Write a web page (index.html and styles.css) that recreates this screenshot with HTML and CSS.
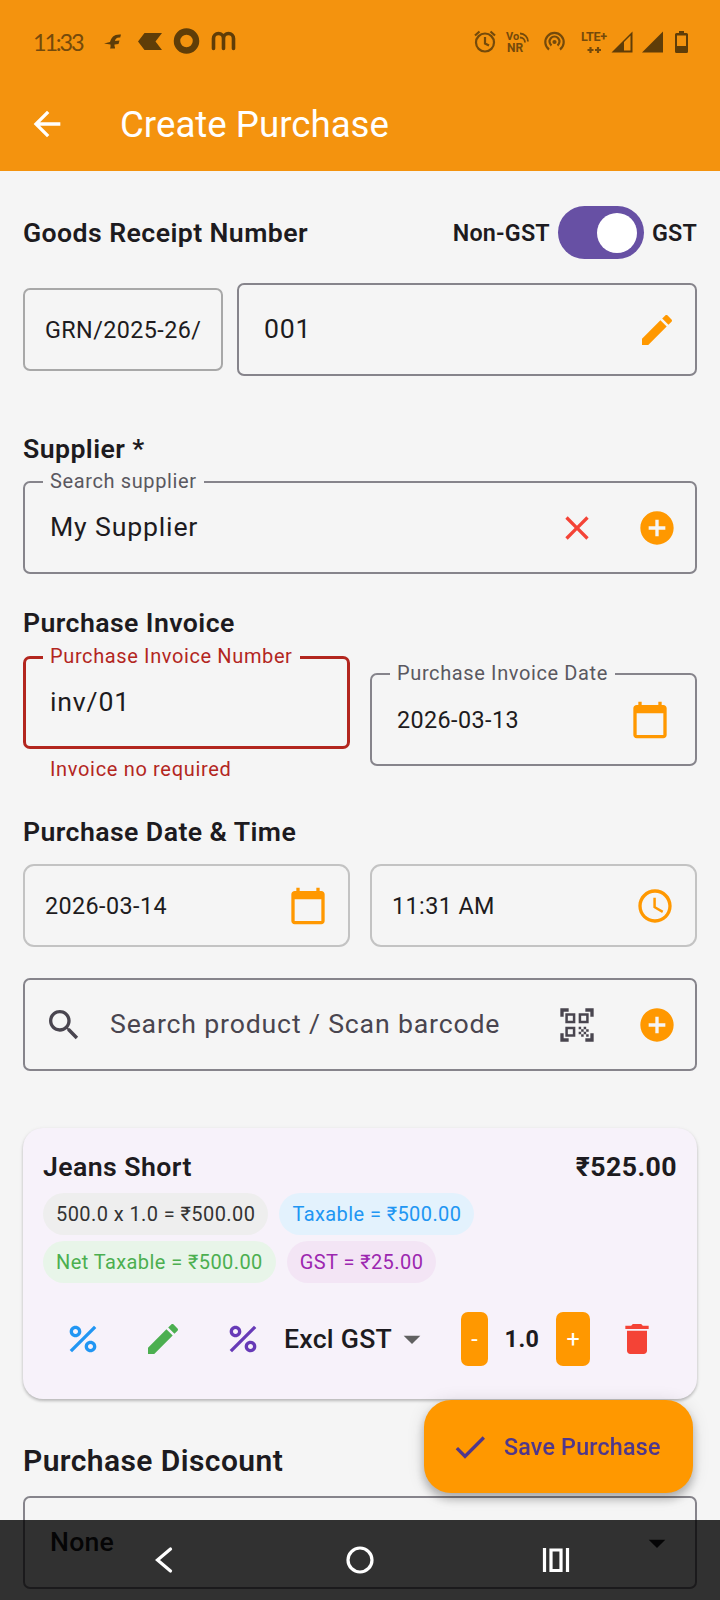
FILE: index.html
```html
<!DOCTYPE html>
<html lang="en">
<head>
  <meta charset="UTF-8">
  <meta name="viewport" content="width=device-width, initial-scale=1.0">
  <title>Create Purchase</title>
  <link rel="stylesheet" href="styles.css">
</head>
<body>
  <!-- Shared icons -->
  <svg class="sprite" aria-hidden="true">
    <symbol id="i-edit" viewBox="0 0 24 24"><path d="M3 17.25V21h3.75L17.81 9.94l-3.75-3.75L3 17.25zM20.71 7.04c.39-.39.39-1.02 0-1.41l-2.34-2.34c-.39-.39-1.02-.39-1.41 0l-1.83 1.83 3.75 3.75 1.83-1.83z"/></symbol>
    <symbol id="i-add" viewBox="0 0 24 24"><path d="M12 2C6.48 2 2 6.48 2 12s4.48 10 10 10 10-4.48 10-10S17.52 2 12 2zm5 11h-4v4h-2v-4H7v-2h4V7h2v4h4v2z"/></symbol>
    <symbol id="i-calendar" viewBox="0 0 24 24"><path d="M20 3h-1V1h-2v2H7V1H5v2H4c-1.1 0-2 .9-2 2v16c0 1.1.9 2 2 2h16c1.1 0 2-.9 2-2V5c0-1.1-.9-2-2-2zm0 18H4V8h16v13z"/></symbol>
    <symbol id="i-percent" viewBox="0 0 24 24"><path d="M7.5 11C9.43 11 11 9.43 11 7.5S9.43 4 7.5 4 4 5.57 4 7.5 5.57 11 7.5 11zm0-5C8.33 6 9 6.67 9 7.5S8.33 9 7.5 9 6 8.33 6 7.5 6.67 6 7.5 6zM4 18.58 18.59 4 20 5.41 5.42 20zM16.5 13c-1.93 0-3.5 1.57-3.5 3.5s1.57 3.5 3.5 3.5 3.5-1.57 3.5-3.5-1.57-3.5-3.5-3.5zm0 5c-.83 0-1.5-.67-1.5-1.5s.67-1.5 1.5-1.5 1.5.67 1.5 1.5-.67 1.5-1.5 1.5z"/></symbol>
    <symbol id="i-drop" viewBox="0 0 24 24"><path d="M7 10l5 5 5-5z"/></symbol>
  </svg>

  <header class="topbar">
    <div class="status">
      <span class="clock">11:33</span>
      <svg class="status-left" width="132" height="30" viewBox="0 0 132 30">
        <path d="M-1 16.500 5 15c1.500-5 4-8 11-7.500l-.8 3c-3.500-.3-4.700 1-5.200 3.500l4.500-.5-1 3.500-4 .5c-.3 2 .8 2.500.5 4H5c.8-1.500.5-2.500.5-4z"/>
        <path d="M33 14.500l6.500-8.500H57L50.500 14.500 57 23H39.500z"/>
        <circle cx="81.500" cy="14" r="9.500" fill="none" stroke="#5f3d08" stroke-width="6.500"/>
        <path d="M108.500 21.500V11.500a4.800 4.800 0 0 1 10 0v10M118.500 11.500a4.800 4.800 0 0 1 10 0v10" fill="none" stroke="#5f3d08" stroke-width="3.600" stroke-linecap="round"/>
      </svg>
      <svg class="status-right" width="216" height="30" viewBox="0 0 216 30">
        <g fill="none" stroke="#744a0b" stroke-width="2.200">
          <circle cx="13" cy="15.500" r="9"/>
          <path d="M13 10v6.500l4 2M3 8.500l4.500-4M23 8.500l-4.500-4"/>
          <path d="M48 10.500a5 5 0 0 1 5 5M48 6.500a8 8 0 0 1 8 8" stroke-width="1.800"/>
          <path d="M77 22.500a9.200 9.200 0 1 1 11 0M79.500 18.500a5 5 0 1 1 6 0"/>
          <circle cx="82.500" cy="15" r="1" />
          <path d="M118.500 20v6M115.500 23h6M126 20v6M123 23h6"/>
        </g>
        <text x="34" y="13" class="tiny">Vo</text>
        <text x="35" y="25" class="tiny tiny-nr">NR</text>
        <text x="109" y="13.500" class="tiny tiny-lte">LTE+</text>
        <path fill-rule="evenodd" d="M139.500 25.500 160.500 4.500v21zM152 15v8.500h6.500v-15z"/>
        <path d="M170 25.500 191 4.500v21z"/>
        <path fill-rule="evenodd" d="M207 4h5v2h2.500q1.500 0 1.500 1.500v17q0 1.500-1.500 1.500h-10q-1.500 0-1.500-1.500v-17q0-1.500 1.500-1.500h2.500zM205 8.500V19h9V8.500z"/>
      </svg>
    </div>
    <div class="appbar">
      <svg class="icon" viewBox="0 0 24 24"><path d="M20 11H7.830l5.590-5.590L12 4l-8 8 8 8 1.410-1.410L7.830 13H20v-2z"/></svg>
      <h1>Create Purchase</h1>
    </div>
  </header>

  <main class="content">
    <div class="title-row">
      <h2>Goods Receipt Number</h2>
      <div class="gst-toggle">
        <span>Non-GST</span>
        <div class="switch"><div class="thumb"></div></div>
        <span>GST</span>
      </div>
    </div>

    <div class="grn-row">
      <div class="box prefix">GRN/2025-26/</div>
      <div class="field">
        <span class="value">001</span>
        <div class="slot orange"><svg class="icon"><use href="#i-edit"/></svg></div>
      </div>
    </div>

    <h2 class="supplier-title">Supplier *</h2>
    <div class="field">
      <label>Search supplier</label>
      <span class="value">My Supplier</span>
      <div class="slot red"><svg class="icon" viewBox="0 0 24 24"><path d="M19 6.410L17.590 5 12 10.590 6.410 5 5 6.410 10.590 12 5 17.590 6.410 19 12 13.410 17.590 19 19 17.590 13.410 12z"/></svg></div>
      <div class="slot orange"><svg class="icon"><use href="#i-add"/></svg></div>
    </div>

    <h2 class="invoice-title">Purchase Invoice</h2>
    <div class="two-cols invoice-row">
      <div>
        <div class="field error">
          <label>Purchase Invoice Number</label>
          <span class="value">inv/01</span>
        </div>
        <p class="error-text">Invoice no required</p>
      </div>
      <div class="field date-field">
        <label>Purchase Invoice Date</label>
        <span class="value small">2026-03-13</span>
        <svg class="icon orange"><use href="#i-calendar"/></svg>
      </div>
    </div>

    <h2 class="date-title">Purchase Date &amp; Time</h2>
    <div class="two-cols">
      <div class="box picker">
        <span>2026-03-14</span>
        <svg class="icon orange"><use href="#i-calendar"/></svg>
      </div>
      <div class="box picker">
        <span>11:31 AM</span>
        <svg class="icon orange" viewBox="0 0 24 24"><path d="M11.990 2C6.470 2 2 6.480 2 12s4.470 10 9.990 10C17.520 22 22 17.520 22 12S17.520 2 11.990 2zM12 20c-4.420 0-8-3.580-8-8s3.580-8 8-8 8 3.580 8 8-3.580 8-8 8zm.5-13H11v6l5.250 3.150.75-1.230-4.500-2.670z"/></svg>
      </div>
    </div>

    <div class="field search">
      <div class="slot lens"><svg class="icon" viewBox="0 0 24 24"><path d="M15.500 14h-.79l-.28-.27C15.410 12.590 16 11.110 16 9.500 16 5.910 13.090 3 9.500 3S3 5.910 3 9.500 5.910 16 9.500 16c1.610 0 3.090-.59 4.230-1.570l.27.28v.79l5 4.990L20.490 19l-4.990-5zm-6 0C7.010 14 5 11.990 5 9.500S7.010 5 9.500 5 14 7.010 14 9.500 11.990 14 9.500 14z"/></svg></div>
      <span class="value hint">Search product / Scan barcode</span>
      <div class="slot"><svg class="icon" viewBox="0 0 24 24"><path fill-rule="evenodd" d="M5 5h6v6H5zM6.500 6.500v3h3v-3zM5 13h6v6H5zM6.500 14.500v3h3v-3zM13 5h6v6h-6zM14.500 6.500v3h3v-3zM13 13h1.500v1.500H13zM14.500 14.500H16V16h-1.500zM16 13h1.500v1.500H16zM13 16h1.500v1.500H13zM14.500 17.500H16V19h-1.500zM16 16h1.500v1.500H16zM17.500 14.500H19V16h-1.500zM17.500 17.500H19V19h-1.500zM22 7h-2V4h-3V2h5zM22 22v-5h-2v3h-3v2zM2 22h5v-2H4v-3H2zM2 2v5h2V4h3V2z"/></svg></div>
      <div class="slot orange"><svg class="icon"><use href="#i-add"/></svg></div>
    </div>

    <section class="card">
      <div class="card-head">
        <h2>Jeans Short</h2>
        <span class="total">₹525.00</span>
      </div>
      <div class="chips">
        <span class="chip chip-grey">500.0 x 1.0 = ₹500.00</span>
        <span class="chip chip-blue">Taxable = ₹500.00</span>
        <span class="chip chip-green">Net Taxable = ₹500.00</span>
        <span class="chip chip-purple">GST = ₹25.00</span>
      </div>
      <div class="actions">
        <div class="slot blue"><svg class="icon"><use href="#i-percent"/></svg></div>
        <div class="slot green"><svg class="icon"><use href="#i-edit"/></svg></div>
        <div class="slot violet"><svg class="icon"><use href="#i-percent"/></svg></div>
        <div class="gst-select">Excl GST <svg class="icon"><use href="#i-drop"/></svg></div>
        <button class="minus">-</button>
        <span class="qty">1.0</span>
        <button class="plus">+</button>
        <div class="slot red trash"><svg class="icon" viewBox="0 0 24 24"><path d="M6 19c0 1.100.9 2 2 2h8c1.100 0 2-.9 2-2V7H6v12zM19 4h-3.500l-1-1h-5l-1 1H5v2h14V4z"/></svg></div>
      </div>
    </section>

    <h2 class="discount-title">Purchase Discount</h2>
    <div class="field">
      <span class="value medium">None</span>
      <div class="slot"><svg class="icon"><use href="#i-drop"/></svg></div>
    </div>
  </main>

  <button class="fab">
    <svg class="icon" viewBox="0 0 24 24"><path d="M9 16.170L4.830 12l-1.420 1.410L9 19 21 7l-1.410-1.410z"/></svg>
    Save Purchase
  </button>

  <nav class="navbar">
    <svg width="40" height="40" viewBox="0 0 40 40"><path d="M26.500 9 13.500 20l13 11" stroke-linecap="round"/></svg>
    <svg width="40" height="40" viewBox="0 0 40 40"><circle cx="20" cy="20" r="12"/></svg>
    <svg width="40" height="40" viewBox="0 0 40 40"><path d="M8.500 8v24M31.500 8v24M15 10h10v20.500H15z"/></svg>
  </nav>
</body>
</html>
```

FILE: styles.css
```css
* {
  box-sizing: border-box;
}
body {
  margin: 0;
  height: 1600px;
  overflow: hidden;
  background-color: #f5f5f5;
  color: #1d1b20;
  font-family: Roboto, sans-serif;
  font-size: 23.33px;
  letter-spacing: 0.42px;
}
h1, h2, p {
  margin: 0;
}
button {
  border: none;
  padding: 0;
  font-family: inherit;
  cursor: pointer;
}
.sprite {
  display: none;
}
.icon {
  display: block;
  width: 40px;
  height: 40px;
  flex: none;
  fill: currentColor;
}
.orange { color: #ff9800; }
.red { color: #f44336; }
.blue { color: #2196f3; }
.green { color: #4caf50; }
.violet { color: #673ab7; }

/* Status bar and app bar */
.topbar {
  height: 171px;
  background-color: #f4930e;
}
.status {
  display: flex;
  align-items: center;
  height: 83px;
  padding: 0 32px 0 33px;
  fill: #5f3d08;
}
.clock {
  width: 72px;
  color: #744a0b;
  font-family: Lato, sans-serif;
  font-size: 23.5px;
  letter-spacing: -2.2px;
}
.status-left {
  overflow: visible;
}
.status-right {
  margin-left: auto;
}
.tiny {
  fill: #744a0b;
  font-size: 11px;
  font-weight: 700;
  letter-spacing: 0;
}
.tiny-nr {
  font-size: 12px;
}
.tiny-lte {
  font-size: 12.5px;
  letter-spacing: -0.3px;
}
.appbar {
  display: flex;
  align-items: center;
  height: 82px;
  padding-left: 27px;
  gap: 53px;
  color: white;
}
.appbar h1 {
  font-size: 36.67px;
  font-weight: 400;
  letter-spacing: 0;
}

/* Form */
.content {
  padding: 35px 23px 0 23px;
}
h2 {
  font-size: 26.67px;
  font-weight: 600;
  line-height: 32px;
}
.title-row {
  display: flex;
  justify-content: space-between;
  align-items: center;
  height: 53px;
}
.gst-toggle {
  display: flex;
  align-items: center;
  gap: 8px;
  font-weight: 600;
  letter-spacing: 0.2px;
}
.switch {
  display: flex;
  justify-content: flex-end;
  width: 86px;
  height: 53px;
  padding: 6.5px;
  border-radius: 27px;
  background-color: #6750a4;
}
.thumb {
  width: 40px;
  height: 40px;
  border-radius: 50%;
  background-color: white;
}
.grn-row {
  display: flex;
  align-items: center;
  gap: 14px;
  margin-top: 24px;
}
.box {
  display: flex;
  align-items: center;
  height: 83px;
  padding: 0 20px;
  border: 2px solid #a8a8a8;
  border-radius: 7px;
}
.prefix {
  width: 200px;
  white-space: nowrap;
}
.field {
  position: relative;
  display: flex;
  flex: 1;
  align-items: center;
  height: 93px;
  border: 2px solid #86848b;
  border-radius: 7px;
}
.field label {
  position: absolute;
  top: -14px;
  left: 18px;
  padding: 0 7px;
  background-color: #f5f5f5;
  color: #5a5860;
  font-size: 20px;
  line-height: 24px;
  letter-spacing: 0.62px;
}
.value {
  flex: 1;
  padding: 0 0 2px 25px;
  font-size: 26.67px;
  letter-spacing: 0.83px;
}
.small {
  padding-bottom: 0;
  font-size: 23.33px;
  letter-spacing: 0.42px;
}
.medium {
  font-weight: 500;
  letter-spacing: 0.25px;
}
.hint {
  padding-left: 8px;
  color: #49454f;
}
.slot {
  display: flex;
  justify-content: center;
  width: 80px;
  flex: none;
}
.field .slot:last-child {
  margin-right: -2px;
}
.supplier-title {
  margin: 57px 0 16px;
}
.invoice-title {
  margin: 33px 0 17px;
}
.two-cols {
  display: grid;
  grid-template-columns: 1fr 1fr;
  gap: 20px;
}
.invoice-row {
  height: 110px;
}
.error {
  border: 3px solid #b3261e;
}
.error label {
  top: -15px;
  left: 17px;
  color: #b3261e;
}
.error .value {
  padding-left: 24px;
}
.error-text {
  padding: 8px 0 0 27px;
  color: #b3261e;
  font-size: 20px;
  line-height: 24px;
  letter-spacing: 0.67px;
}
.date-field {
  margin-top: 17px;
  padding-right: 25px;
}
.date-title {
  margin: 50px 0 16px;
}
.picker {
  justify-content: space-between;
  border-color: #c3c3c3;
  border-radius: 11px;
}
.search {
  margin-top: 31px;
  color: #49454f;
}
.lens {
  width: 77px;
}

/* Product card */
.card {
  height: 271px;
  margin-top: 57px;
  padding: 23px 20px 0;
  border-radius: 20px;
  background-color: #f7f2fa;
  box-shadow: 0 2px 3px rgba(0, 0, 0, 0.2), 0 1px 4px rgba(0, 0, 0, 0.08);
}
.card-head {
  display: flex;
  justify-content: space-between;
}
.total {
  font-size: 26.67px;
  font-weight: 700;
  line-height: 32px;
}
.chips {
  display: flex;
  flex-wrap: wrap;
  gap: 6px 11px;
  margin-top: 10px;
}
.chip {
  height: 42px;
  padding: 0 13px;
  border-radius: 21px;
  font-size: 20px;
  line-height: 43px;
}
.chip-grey { background-color: #eeeeee; color: #333; }
.chip-blue { background-color: #e3f2fd; color: #2196f3; }
.chip-green { background-color: #e8f5e9; color: #4caf50; }
.chip-purple { background-color: #f3e5f5; color: #9c27b0; }
.actions {
  display: flex;
  align-items: center;
  height: 54px;
  margin-top: 29px;
}
.gst-select {
  display: flex;
  align-items: center;
  width: 178px;
  padding-left: 1px;
  font-size: 26.67px;
  font-weight: 500;
  letter-spacing: 0.25px;
}
.gst-select .icon {
  color: #616161;
}
.minus, .plus {
  width: 27px;
  height: 54px;
  border-radius: 7px;
  background-color: #ff9800;
  color: white;
  font-size: 23.33px;
}
.plus {
  width: 34px;
}
.qty {
  width: 68px;
  text-align: center;
  font-weight: 700;
}
.trash {
  margin-left: auto;
}
.discount-title {
  margin: 44px 0 17px;
  font-size: 30px;
  line-height: 36px;
}

/* Floating button and system navigation lie over the form */
.fab {
  position: fixed;
  left: 424px;
  top: 1400px;
  display: flex;
  align-items: center;
  width: 269px;
  height: 93px;
  padding-left: 26px;
  gap: 14px;
  border-radius: 27px;
  background-color: #ff9800;
  color: #4f378b;
  font-size: 23.33px;
  font-weight: 500;
  letter-spacing: 0.17px;
  box-shadow: 0 6px 10px rgba(0, 0, 0, 0.25), 0 2px 18px rgba(0, 0, 0, 0.12);
}
.navbar {
  position: fixed;
  left: 0;
  right: 0;
  bottom: 0;
  display: flex;
  justify-content: space-between;
  align-items: center;
  height: 80px;
  padding: 0 144px;
  background-color: rgba(0, 0, 0, 0.8);
}
.navbar svg {
  fill: none;
  stroke: white;
  stroke-width: 3.2;
}
```
